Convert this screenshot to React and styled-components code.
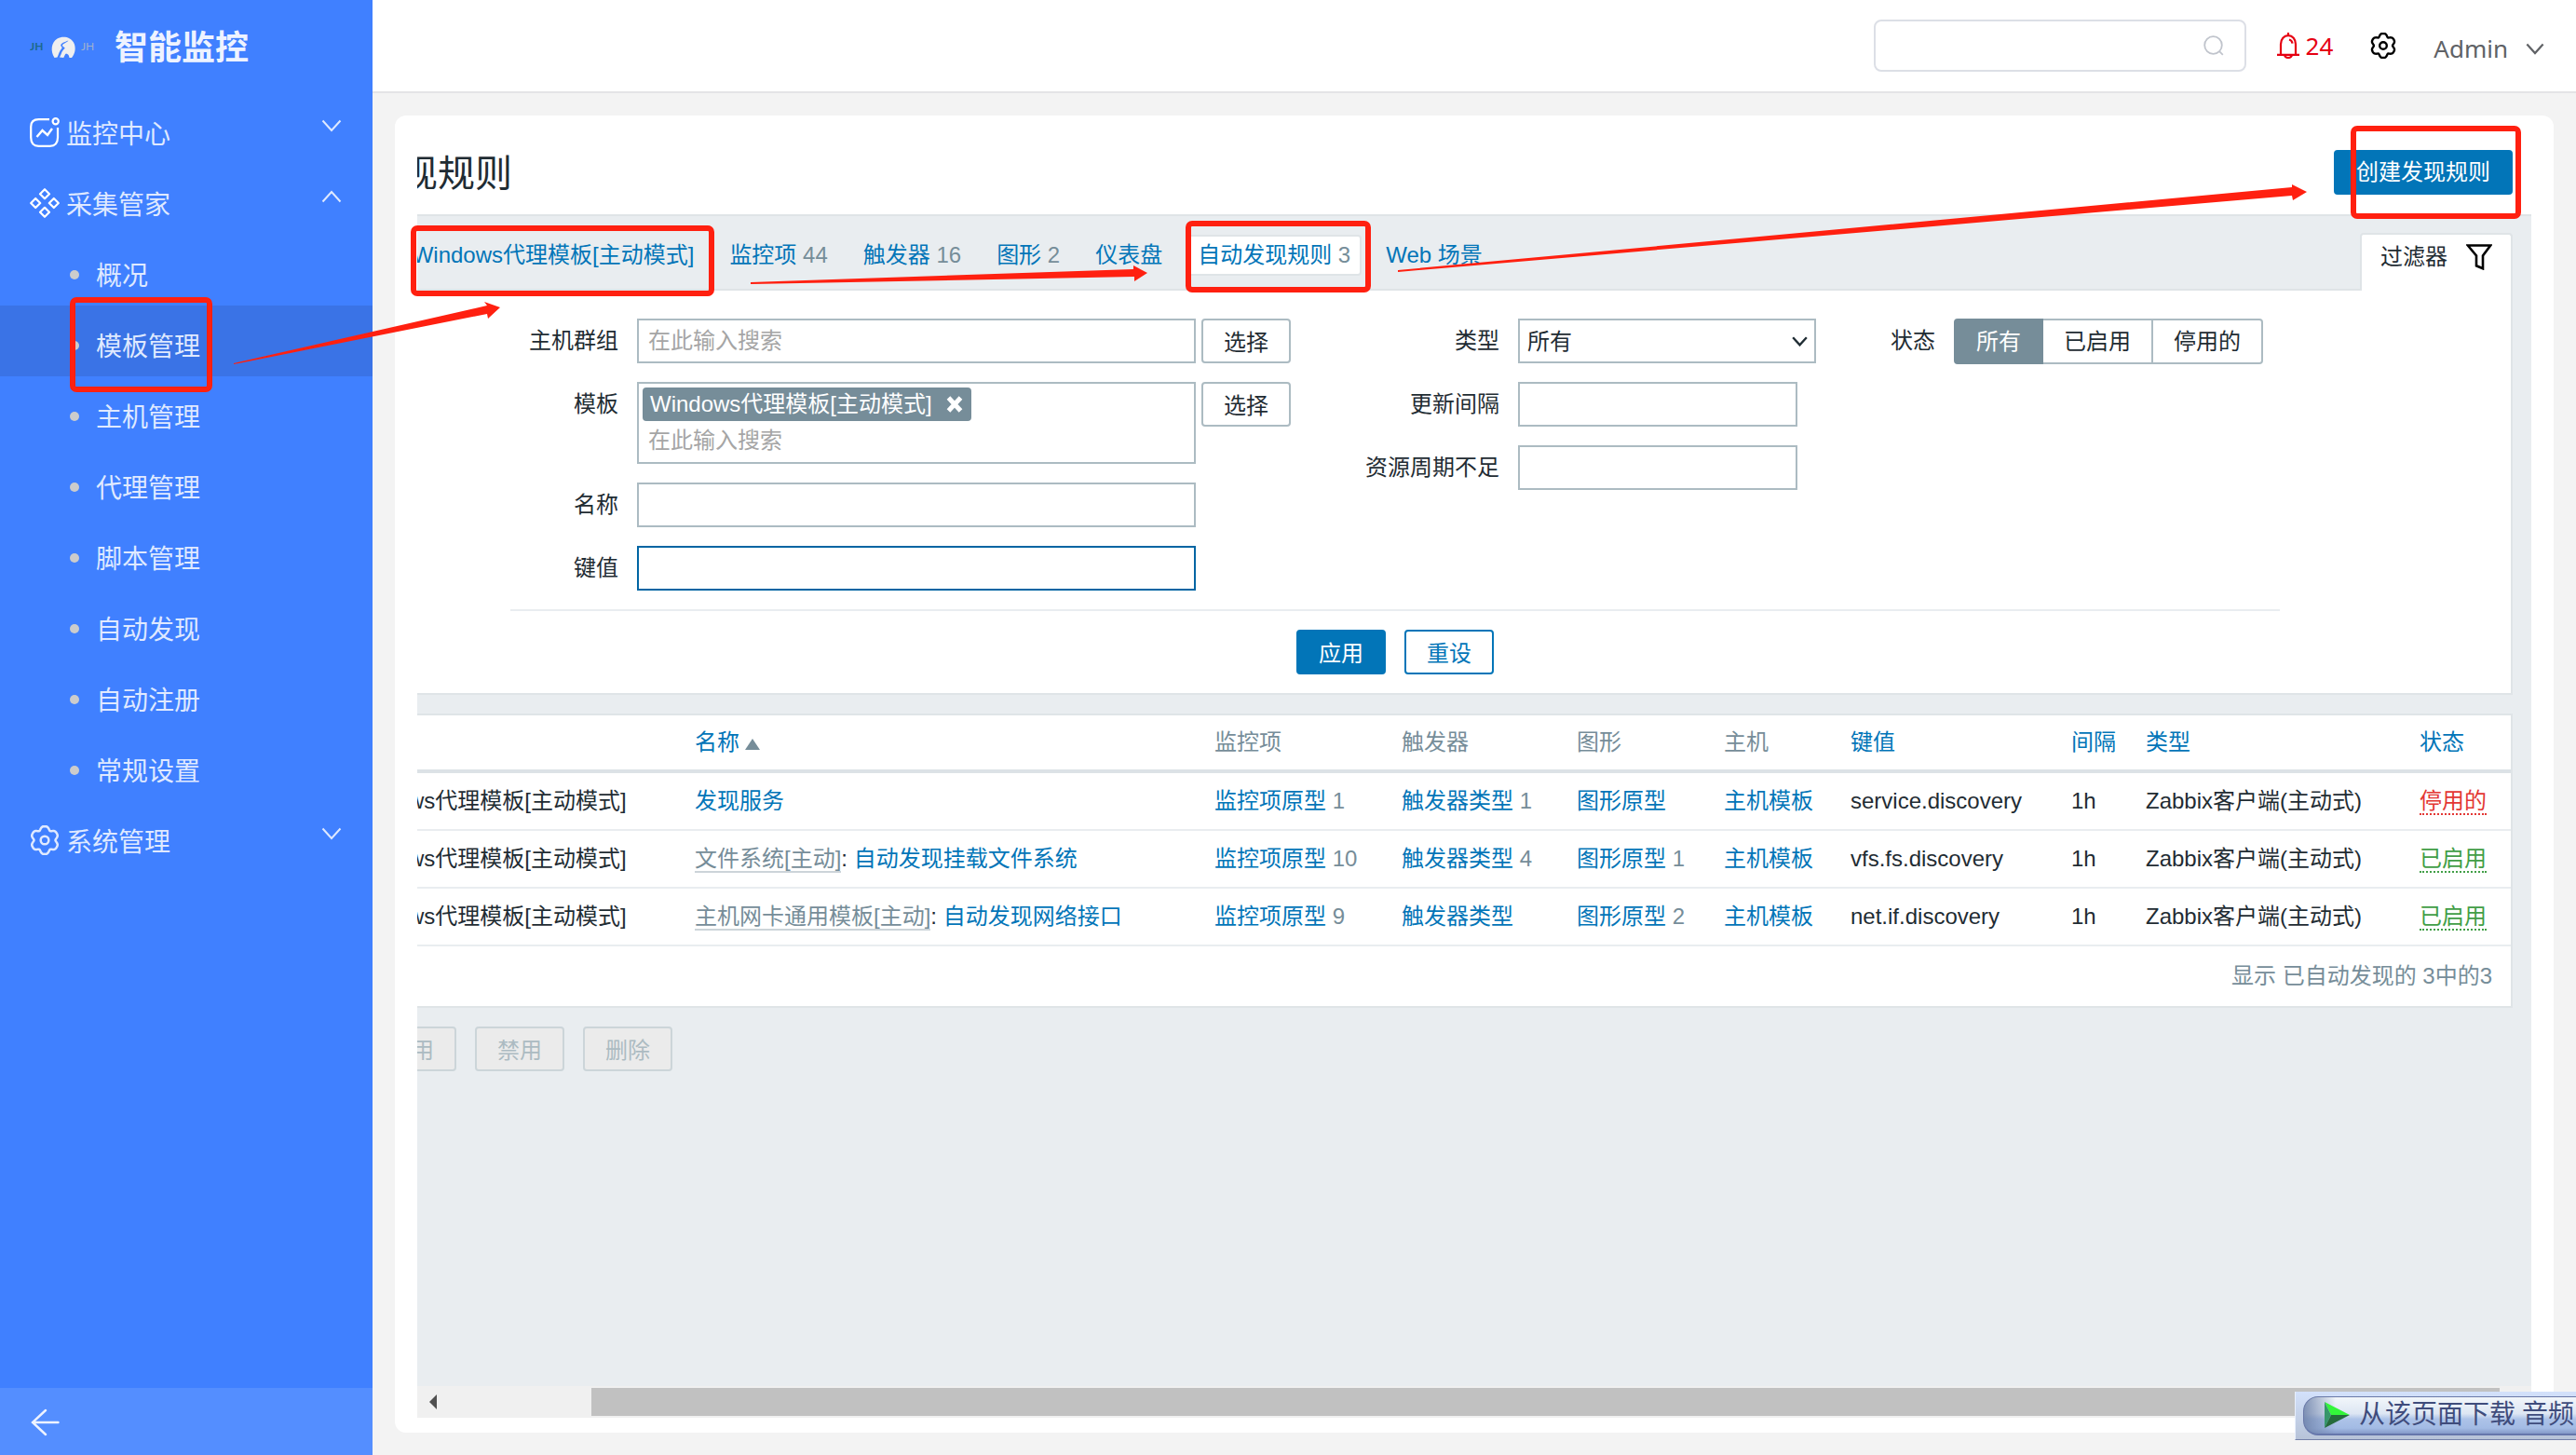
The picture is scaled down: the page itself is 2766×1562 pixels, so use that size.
import React from "react";
import styled, { createGlobalStyle } from "styled-components";

const GlobalStyle = createGlobalStyle`
  * {
    box-sizing: border-box;
  }

  body {
    margin: 0;
    background: #f3f3f3;
    color: #1f2c33;
    font-family: "Liberation Sans", "Noto Sans CJK SC", sans-serif;
    font-size: 24px;
    line-height: 28px;
  }

  a {
    color: #0275b8;
    text-decoration: none;
  }

  button,
  input,
  select {
    font: inherit;
    color: inherit;
  }
`;

const Layout = styled.div`
  display: flex;
  min-height: 100vh;
`;

/* ---------- sidebar ---------- */

const Sidebar = styled.aside`
  display: flex;
  flex-direction: column;
  flex: 0 0 400px;
  background: #4080ff;
  color: #dfe9ff;
  font-family: "Noto Sans", "Noto Sans CJK SC", sans-serif;
`;

const Brand = styled.div`
  display: flex;
  align-items: center;
  height: 100px;
  padding-left: 32px;
`;

const BrandName = styled.h1`
  margin: 2px 0 0 22px;
  color: #eef3ff;
  font-size: 36px;
  line-height: 44px;
  font-weight: 700;
`;

const Nav = styled.nav`
  flex: 1;
`;

const NavGroup = styled.button`
  display: flex;
  align-items: center;
  width: 100%;
  height: 76px;
  padding: 8px 33px 0 32px;
  border: 0;
  background: transparent;
  color: #dfe9ff;
  font-size: 28px;
  line-height: 40px;
  text-align: left;
  cursor: pointer;

  span {
    flex: 1;
    margin: 2px 0 0 7px;
  }

  > svg:last-child {
    margin-bottom: 14px;
  }
`;

const NavLink = styled.a`
  display: flex;
  align-items: center;
  gap: 18px;
  height: 76px;
  padding: 10px 0 0 75px;
  background: ${(props) => (props.$active ? "#3a73e6" : "transparent")};
  color: #dfe9ff;
  font-size: 28px;
  line-height: 40px;

  &::before {
    content: "";
    width: 10px;
    height: 10px;
    border-radius: 50%;
    background: #cccccc;
  }
`;

const Collapse = styled.button`
  display: flex;
  align-items: center;
  height: 72px;
  padding: 2px 0 0 32px;
  border: 0;
  background: #548eff;
  color: #eef3ff;
  cursor: pointer;
`;

/* ---------- top bar ---------- */

const Main = styled.main`
  display: flex;
  flex: 1;
  flex-direction: column;
  min-width: 0;
`;

const TopBar = styled.header`
  display: flex;
  align-items: center;
  justify-content: flex-end;
  height: 100px;
  padding: 0 34px;
  border-bottom: 2px solid #e4e4e6;
  background: #ffffff;
  font-family: "Noto Sans", "Noto Sans CJK SC", sans-serif;
  font-size: 26px;
  line-height: 36px;
`;

const SearchBox = styled.label`
  display: flex;
  align-items: center;
  width: 400px;
  height: 56px;
  padding: 0 22px 0 16px;
  border: 2px solid #dcdfe6;
  border-radius: 8px;

  input {
    flex: 1;
    min-width: 0;
    border: 0;
    outline: none;
    background: transparent;
  }
`;

const Alerts = styled.a`
  display: flex;
  align-items: center;
  gap: 7px;
  margin-left: 33px;
  color: #e60012;
`;

const IconButton = styled.button`
  display: flex;
  margin: 0 40px;
  padding: 0;
  border: 0;
  background: transparent;
  color: #000000;
  cursor: pointer;
`;

const UserMenu = styled.button`
  display: flex;
  align-items: center;
  gap: 19px;
  padding: 6px 0 0;
  border: 0;
  background: transparent;
  color: #606266;
  cursor: pointer;
`;

/* ---------- page card ---------- */

const Card = styled.section`
  display: flex;
  flex: 1;
  flex-direction: column;
  margin: 24px;
  padding: 0 24px 16px;
  border-radius: 12px;
  background: #ffffff;
`;

const Viewport = styled.div`
  display: flex;
  flex: 1;
  flex-direction: column;
  overflow: hidden;
`;

const Scrolled = styled.div`
  display: flex;
  flex: 1;
  flex-direction: column;
  margin-left: -170px;
`;

const Button = styled.button`
  height: 48px;
  min-width: 96px;
  padding: 3px 22px 0;
  border: 2px solid ${(props) => (props.$plain ? "#acbbc2" : "#0275b8")};
  border-radius: 4px;
  background: ${(props) => (props.$primary ? "#0275b8" : "#ffffff")};
  color: ${(props) => (props.$primary ? "#ffffff" : props.$plain ? "#1f2c33" : "#0275b8")};
  line-height: 28px;
  white-space: nowrap;
  cursor: pointer;

  &:disabled {
    border-color: #ccd5d9;
    background: #ebebeb;
    color: #acbbc2;
    cursor: default;
  }
`;

const PageHead = styled.div`
  display: flex;
  align-items: flex-start;
  justify-content: space-between;
  height: 106px;
  padding: 37px 20px 0 32px;

  ${Button} {
    padding-top: 0;
  }
`;

const PageTitle = styled.h2`
  margin: 0;
  font-size: 40px;
  line-height: 50px;
  font-weight: 400;
`;

const PageBody = styled.div`
  flex: 1;
  border-top: 2px solid #dfe4e7;
  background: #e9edf0;
`;

const TabBar = styled.div`
  display: flex;
  align-items: flex-start;
  justify-content: space-between;
  height: 78px;
  padding: 0 20px 0 12px;
`;

const Tabs = styled.nav`
  display: flex;
  align-items: center;
  gap: 14px;
  padding-top: 20px;
  white-space: nowrap;
`;

const Crumb = styled.span`
  display: flex;
  align-items: center;
  color: #768d99;
`;

const Tab = styled.a`
  height: 44px;
  padding: 6px 10px;
  border: 2px solid transparent;
  border-radius: 4px;
  ${(props) => props.$active && `
    border-color: #dfe4e7;
    background: #ffffff;
  `}
`;

const Count = styled.span`
  color: #768d99;
`;

const FilterToggle = styled.button`
  display: flex;
  align-items: center;
  align-self: flex-end;
  gap: 20px;
  height: 62px;
  margin-bottom: -2px;
  padding: 0 20px 12px 20px;
  border: 2px solid #dfe4e7;
  border-bottom: 0;
  border-radius: 4px 4px 0 0;
  background: #ffffff;
  z-index: 1;
  cursor: pointer;
`;

/* ---------- filter ---------- */

const FilterPanel = styled.form`
  margin: 0 20px;
  padding: 30px 20px 20px;
  border: 2px solid #dfe4e7;
  background: #ffffff;
`;

const FilterFields = styled.div`
  display: flex;
  align-items: flex-start;
  gap: 80px;
  max-width: 1900px;
  margin: 0 auto;
  padding-bottom: 20px;
  border-bottom: 2px solid #e9edf0;
`;

const FilterColumn = styled.div`
  display: grid;
  grid-template-columns: ${(props) => props.$labelWidth}px auto;
  gap: 20px;
`;

const FieldLabel = styled.label`
  height: 48px;
  line-height: 48px;
  text-align: right;
  white-space: nowrap;
`;

const FieldRow = styled.div`
  display: flex;
  align-items: flex-start;
  gap: 6px;
`;

const TextInput = styled.input`
  width: ${(props) => props.$width}px;
  height: 48px;
  padding: 0 10px;
  border: 2px solid ${(props) => (props.$focused ? "#0065a3" : "#acbbc2")};
  border-radius: 0;
  outline: none;
  background: #ffffff;

  &::placeholder {
    color: #a5a5a5;
    opacity: 1;
  }
`;

const MultiSelect = styled.div`
  width: 600px;
  height: 88px;
  padding: 4px;
  border: 2px solid #acbbc2;

  input {
    display: block;
    width: 100%;
    height: 42px;
    padding: 0 6px;
    border: 0;
    outline: none;
  }

  input::placeholder {
    color: #a5a5a5;
    opacity: 1;
  }
`;

const Tag = styled.span`
  display: inline-flex;
  align-items: center;
  gap: 15px;
  height: 36px;
  padding: 0 9px 0 8px;
  border-radius: 4px;
  background: #768d99;
  color: #ffffff;
  vertical-align: top;

  button {
    display: flex;
    padding: 0;
    border: 0;
    background: transparent;
    cursor: pointer;
  }
`;

const SelectWrap = styled.div`
  position: relative;
  width: 320px;
  height: 48px;

  select {
    width: 100%;
    height: 48px;
    padding: 2px 8px 0;
    border: 2px solid #acbbc2;
    border-radius: 0;
    background: #ffffff;
    appearance: none;
  }

  svg {
    position: absolute;
    top: 19px;
    right: 9px;
    pointer-events: none;
  }
`;

const Segments = styled.div`
  display: flex;
  height: 49px;
`;

const Segment = styled.label`
  position: relative;
  display: flex;
  align-items: center;
  padding: 0 22px;
  border: 2px solid #acbbc2;
  border-left-width: 0;
  white-space: nowrap;
  cursor: pointer;

  &:first-child {
    border-left-width: 2px;
    border-radius: 4px 0 0 4px;
  }

  &:last-child {
    border-radius: 0 4px 4px 0;
  }

  &:has(input:checked) {
    border-color: #768d99;
    background: #768d99;
    color: #ffffff;
  }

  input {
    position: absolute;
    inset: 0;
    margin: 0;
    opacity: 0;
  }
`;

const FilterActions = styled.div`
  display: flex;
  justify-content: center;
  gap: 20px;
  padding-top: 20px;
`;

/* ---------- table ---------- */

const RuleTable = styled.table`
  width: calc(100% - 40px);
  margin: 20px 20px 0;
  border: 2px solid #dfe4e7;
  border-spacing: 0;
  border-collapse: separate;
  background: #ffffff;
  table-layout: fixed;
  white-space: nowrap;

  th,
  td {
    height: 62px;
    padding: 0 10px 1px;
    border-bottom: 2px solid #e9edf0;
    text-align: left;
    font-weight: 400;
  }

  th {
    border-bottom: 4px solid #dce2e6;
    color: #768d99;
  }

  tfoot td {
    height: 64px;
    padding-right: 20px;
    border-bottom: 0;
    color: #768d99;
    text-align: right;
  }

  input {
    display: block;
    width: 24px;
    height: 24px;
    margin: 0 auto;
  }
`;

const Col = styled.col`
  width: ${(props) => (props.$width ? `${props.$width}px` : "auto")};
`;

const SortArrow = styled.span`
  display: inline-block;
  margin-left: 6px;
  border: 8px solid transparent;
  border-top: 0;
  border-bottom: 12px solid #768d99;
`;

const ParentLink = styled.a`
  border-bottom: 2px solid #ccd4d9;
  color: #768d99;
`;

const StatusLink = styled.a`
  border-bottom: 2px dotted;
  color: ${(props) => (props.$enabled ? "#429e47" : "#e33734")};
`;

const ActionBar = styled.div`
  display: flex;
  align-items: center;
  gap: 20px;
  padding: 20px;
`;

const Selected = styled.span`
  width: 76px;
  color: #768d99;
`;

const ScrollTrack = styled.div`
  display: flex;
  align-items: center;
  height: 34px;
  background: #f0f0f0;
`;

const ScrollArrow = styled.button`
  display: flex;
  align-items: center;
  justify-content: center;
  width: 34px;
  height: 34px;
  padding: 0;
  border: 0;
  background: transparent;
`;

const ScrollThumb = styled.div`
  flex: 1;
  height: 30px;
  margin-left: 153px;
  background: #c1c1c1;
`;

/* ---------- things floating above the page ---------- */

const DownloadBar = styled.div`
  position: fixed;
  right: 0;
  bottom: 16px;
  width: 302px;
  height: 52px;
  padding: 5px 0 5px 8px;
  border: solid #7380a8;
  border-width: 0 0 1px 0;
  border-left: 1px solid #e8effc;
  overflow: hidden;
  background: linear-gradient(#d3e1fb, #b7c3d8);
`;

const DownloadButton = styled.button`
  display: flex;
  align-items: center;
  gap: 10px;
  width: 320px;
  height: 42px;
  padding: 0 0 2px 22px;
  border: 1px solid #6a79a8;
  border-bottom: 2px solid #6677ab;
  border-radius: 16px 0 0 16px;
  background: linear-gradient(90deg, rgba(110, 130, 170, 0.85), rgba(150, 165, 200, 0) 34px),
    linear-gradient(#f2f6fa 0%, #dde6f3 45%, #adc3e8 60%, #a3bbe4 85%, #8499c8 100%);
  color: #3f4c7c;
  font-family: "Liberation Serif", "Noto Sans CJK SC", serif;
  font-size: 28px;
  line-height: 36px;
  white-space: nowrap;
`;

const Annotations = styled.svg`
  position: absolute;
  top: 0;
  left: 0;
  pointer-events: none;
  z-index: 5;
`;

/* ---------- icons ---------- */

const gearPath = (() => {
  const points = [];
  for (let i = 0; i < 96; i++) {
    const a = (i / 96) * Math.PI * 2;
    const r = 11.9 + 1.5 * Math.cos(6 * a) - 0.35 * Math.cos(12 * a);
    points.push(`${(16 + r * Math.sin(a)).toFixed(2)} ${(16 - r * Math.cos(a)).toFixed(2)}`);
  }
  return `M${points.join("L")}Z`;
})();

const GearIcon = ({ size, stroke = 2.2 }) => (
  <svg width={size} height={size} viewBox="2 2 28 28" fill="none" stroke="currentColor" strokeWidth={stroke}>
    <path d={gearPath} />
    <circle cx="16" cy="16" r="3.8" />
  </svg>
);

const ChevronIcon = ({ up, width = 22, height = 14, stroke = 2 }) => (
  <svg width={width} height={height} viewBox="0 0 22 14" fill="none" stroke="currentColor" strokeWidth={stroke}>
    <path d={up ? "M1.5 12.5 11 2l9.5 10.5" : "M1.5 1.5 11 12l9.5-10.5"} />
  </svg>
);

const MonitorIcon = () => (
  <svg width="32" height="32" viewBox="0 0 32 32" fill="none" stroke="#fff" strokeWidth="2.2">
    <path d="M21 2.2H9.5C4 2.2 1.2 5 1.2 10v11.500c0 6 2.800 9.300 8.300 9.300h12c5.500 0 8.500-3.300 8.500-9.300V11" />
    <circle cx="27.700" cy="4.200" r="3.100" />
    <path d="M7.500 21l6-7 5.500 5 5-7" strokeWidth="2.400" />
  </svg>
);

const DiamondsIcon = () => (
  <svg width="32" height="32" viewBox="0 0 32 32" fill="none" stroke="#fff" strokeWidth="2.2" strokeLinejoin="round">
    <path d="M16 1.200l5 5-5 5-5-5zM16 20.800l5 5-5 5-5-5zM6.200 11l5 5-5 5-5-5zM25.800 11l5 5-5 5-5-5z" />
  </svg>
);

const LogoMark = () => (
  <svg width="69" height="32" viewBox="0 0 69 32">
    <text x="0" y="20" fill="#1c6a8c" fontSize="12" fontWeight="700" fontFamily="Lato, sans-serif">JH</text>
    <path
      fill="#efefef"
      d="M26.500 28C22 21 22.800 11.500 29.500 7.500c6-3.500 14-2 17.500 4 3 5.500 1.800 12-2 16.500h-2.500c-.5-3-1.500-4-3.500-4.500-1.500 1-1.700 2.500-2.700 4.500l-4.300-.5c2.500-4 1.500-6 5.500-9.500 1-1-3-2-2.500-3.500.5-1.500 5-3 6.500-5-4 1.500-8.500 3-8.200 5.200.2 1.300 1.700 2 1.200 3-3 3-3.500 7-5 9.800z"
    />
    <text x="55" y="20" fill="#9fb0cf" fontSize="12" fontWeight="400" fontFamily="Lato, sans-serif">JH</text>
  </svg>
);

const SearchIcon = () => (
  <svg width="22" height="22" viewBox="0 0 22 22" fill="none" stroke="#c0c4cc" strokeWidth="1.800">
    <circle cx="10.500" cy="10.500" r="9.300" />
    <path d="M16.800 16.800l4 4" />
  </svg>
);

const BellIcon = () => (
  <svg width="24" height="28" viewBox="0 0 24 28" fill="none" stroke="currentColor" strokeWidth="2.2">
    <path d="M12 0v3M4 23.500V12.500c0-5.500 3.500-9.300 8-9.300s8 3.800 8 9.300v11M0 23.800h24" />
    <path d="M13 7.500c2 .5 3.200 2 3.500 4.200M8 24c.5 2 2 3 4 3s3.500-1 4-3" />
  </svg>
);

const FilterIcon = () => (
  <svg width="28" height="28" viewBox="0 0 28 28" fill="none" stroke="#000" strokeWidth="2.600">
    <path d="M1.800 1.500h24.400l-8.200 11v13.800l-7-3V12.500z" />
  </svg>
);

const BackIcon = () => (
  <svg width="32" height="30" viewBox="0 0 32 30" fill="none" stroke="currentColor" strokeWidth="2.400" strokeLinecap="round">
    <path d="M30.500 15H3M17 2L3 15l14 13" />
  </svg>
);

const CloseIcon = () => (
  <svg width="18" height="18" viewBox="0 0 18 18" stroke="#fff" strokeWidth="5">
    <path d="M2.500 2l13 14M15.500 2l-13 14" />
  </svg>
);

const PlayIcon = () => (
  <svg width="27" height="28" viewBox="0 0 27 28">
    <path d="M0 0l27 14H7z" fill="#33f53a" />
    <path d="M0 0l7 14-7 14z" fill="#37966b" />
    <path d="M7 14h20L0 28z" fill="#256b3c" />
  </svg>
);

const templateName = "Windows代理模板[主动模式]";

const subItems = ["概况", "模板管理", "主机管理", "代理管理", "脚本管理", "自动发现", "自动注册", "常规设置"];

const tabs = [
  { label: templateName },
  { label: "监控项", count: 44 },
  { label: "触发器", count: 16 },
  { label: "图形", count: 2 },
  { label: "仪表盘" },
  { label: "自动发现规则", count: 3, active: true },
  { label: "Web 场景" },
];

const colWidths = [60, 376, null, 201, 188, 158, 136, 237, 80, 294, 108];

const rules = [
  { name: "发现服务", items: 1, triggers: 1, key: "service.discovery", enabled: false },
  { parent: "文件系统[主动]", name: "自动发现挂载文件系统", items: 10, triggers: 4, graphs: 1, key: "vfs.fs.discovery", enabled: true },
  { parent: "主机网卡通用模板[主动]", name: "自动发现网络接口", items: 9, graphs: 2, key: "net.if.discovery", enabled: true },
];

const Counted = ({ label, count }) => (
  <>
    <a href="#">{label}</a>
    {count && <Count> {count}</Count>}
  </>
);

const App = () => {
  return (
    <>
      <GlobalStyle />
      <Layout>
        <Sidebar>
          <Brand>
            <LogoMark />
            <BrandName>智能监控</BrandName>
          </Brand>
          <Nav>
            <NavGroup type="button">
              <MonitorIcon />
              <span>监控中心</span>
              <ChevronIcon />
            </NavGroup>
            <NavGroup type="button">
              <DiamondsIcon />
              <span>采集管家</span>
              <ChevronIcon up />
            </NavGroup>
            {subItems.map((item) => (
              <NavLink key={item} href="#" $active={item === "模板管理"}>
                {item}
              </NavLink>
            ))}
            <NavGroup type="button">
              <GearIcon size={32} stroke={2.2} />
              <span>系统管理</span>
              <ChevronIcon />
            </NavGroup>
          </Nav>
          <Collapse type="button" aria-label="收起菜单">
            <BackIcon />
          </Collapse>
        </Sidebar>

        <Main>
          <TopBar>
            <SearchBox>
              <input type="text" aria-label="搜索" />
              <SearchIcon />
            </SearchBox>
            <Alerts href="#">
              <BellIcon />
              24
            </Alerts>
            <IconButton type="button" aria-label="设置">
              <GearIcon size={28} stroke={2.4} />
            </IconButton>
            <UserMenu type="button">
              Admin
              <ChevronIcon width={20} height={13} stroke={2.4} />
            </UserMenu>
          </TopBar>

          <Card>
            <Viewport>
              <Scrolled>
                <PageHead>
                  <PageTitle>自动发现规则</PageTitle>
                  <Button type="button" $primary>创建发现规则</Button>
                </PageHead>
                <PageBody>
                  <TabBar>
                    <Tabs>
                      <Crumb>
                        <Tab href="#">所有模板</Tab>/
                      </Crumb>
                      {tabs.map((tab) => (
                        <Tab key={tab.label} href="#" $active={tab.active}>
                          {tab.label}
                          {tab.count && <Count> {tab.count}</Count>}
                        </Tab>
                      ))}
                    </Tabs>
                    <FilterToggle type="button">
                      过滤器
                      <FilterIcon />
                    </FilterToggle>
                  </TabBar>

                  <FilterPanel onSubmit={(e) => e.preventDefault()}>
                    <FilterFields>
                      <FilterColumn $labelWidth={116}>
                        <FieldLabel htmlFor="groups">主机群组</FieldLabel>
                        <FieldRow>
                          <TextInput id="groups" $width={600} placeholder="在此输入搜索" />
                          <Button type="button" $plain>选择</Button>
                        </FieldRow>
                        <FieldLabel htmlFor="templates">模板</FieldLabel>
                        <FieldRow>
                          <MultiSelect>
                            <Tag>
                              {templateName}
                              <button type="button" aria-label="移除">
                                <CloseIcon />
                              </button>
                            </Tag>
                            <input id="templates" placeholder="在此输入搜索" />
                          </MultiSelect>
                          <Button type="button" $plain>选择</Button>
                        </FieldRow>
                        <FieldLabel htmlFor="name">名称</FieldLabel>
                        <TextInput id="name" $width={600} />
                        <FieldLabel htmlFor="key">键值</FieldLabel>
                        <TextInput id="key" $width={600} $focused />
                      </FilterColumn>

                      <FilterColumn $labelWidth={144}>
                        <FieldLabel htmlFor="type">类型</FieldLabel>
                        <SelectWrap>
                          <select id="type">
                            <option>所有</option>
                          </select>
                          <ChevronIcon width={17} height={11} stroke={3} />
                        </SelectWrap>
                        <FieldLabel htmlFor="delay">更新间隔</FieldLabel>
                        <TextInput id="delay" $width={300} />
                        <FieldLabel htmlFor="lifetime">资源周期不足</FieldLabel>
                        <TextInput id="lifetime" $width={300} />
                      </FilterColumn>

                      <FilterColumn $labelWidth={48}>
                        <FieldLabel as="span" id="status-label">状态</FieldLabel>
                        <Segments role="radiogroup" aria-labelledby="status-label">
                          {["所有", "已启用", "停用的"].map((option, i) => (
                            <Segment key={option}>
                              <input type="radio" name="status" defaultChecked={i === 0} />
                              {option}
                            </Segment>
                          ))}
                        </Segments>
                      </FilterColumn>
                    </FilterFields>
                    <FilterActions>
                      <Button type="submit" $primary>应用</Button>
                      <Button type="reset">重设</Button>
                    </FilterActions>
                  </FilterPanel>

                  <RuleTable>
                    <colgroup>
                      {colWidths.map((width, i) => (
                        <Col key={i} $width={width} />
                      ))}
                    </colgroup>
                    <thead>
                      <tr>
                        <th><input type="checkbox" aria-label="全选" /></th>
                        <th>模板</th>
                        <th><a href="#">名称<SortArrow /></a></th>
                        <th>监控项</th>
                        <th>触发器</th>
                        <th>图形</th>
                        <th>主机</th>
                        <th><a href="#">键值</a></th>
                        <th><a href="#">间隔</a></th>
                        <th><a href="#">类型</a></th>
                        <th><a href="#">状态</a></th>
                      </tr>
                    </thead>
                    <tbody>
                      {rules.map((rule) => (
                        <tr key={rule.key}>
                          <td><input type="checkbox" aria-label={rule.name} /></td>
                          <td>{templateName}</td>
                          <td>
                            {rule.parent && (
                              <>
                                <ParentLink href="#">{rule.parent}</ParentLink>
                                {": "}
                              </>
                            )}
                            <a href="#">{rule.name}</a>
                          </td>
                          <td><Counted label="监控项原型" count={rule.items} /></td>
                          <td><Counted label="触发器类型" count={rule.triggers} /></td>
                          <td><Counted label="图形原型" count={rule.graphs} /></td>
                          <td><a href="#">主机模板</a></td>
                          <td>{rule.key}</td>
                          <td>1h</td>
                          <td>Zabbix客户端(主动式)</td>
                          <td>
                            <StatusLink href="#" $enabled={rule.enabled}>
                              {rule.enabled ? "已启用" : "停用的"}
                            </StatusLink>
                          </td>
                        </tr>
                      ))}
                    </tbody>
                    <tfoot>
                      <tr>
                        <td colSpan={11}>显示 已自动发现的 3中的3</td>
                      </tr>
                    </tfoot>
                  </RuleTable>

                  <ActionBar>
                    <Selected>0 选择</Selected>
                    <Button type="button" disabled>启用</Button>
                    <Button type="button" disabled>禁用</Button>
                    <Button type="button" disabled>删除</Button>
                  </ActionBar>
                </PageBody>
              </Scrolled>
              <ScrollTrack>
                <ScrollArrow type="button" aria-label="向左滚动">
                  <svg width="8" height="16" viewBox="0 0 8 16">
                    <path d="M8 0v16L0 8z" fill="#505050" />
                  </svg>
                </ScrollArrow>
                <ScrollThumb />
                <ScrollArrow type="button" aria-label="向右滚动">
                  <svg width="8" height="16" viewBox="0 0 8 16">
                    <path d="M0 0v16l8-8z" fill="#505050" />
                  </svg>
                </ScrollArrow>
              </ScrollTrack>
            </Viewport>
          </Card>
        </Main>
      </Layout>

      <DownloadBar>
        <DownloadButton type="button">
          <PlayIcon />
          从该页面下载 音频
        </DownloadButton>
      </DownloadBar>

      <Annotations width="2766" height="1562" viewBox="0 0 2766 1562">
        <g fill="none" stroke="#ff2010" strokeWidth="6">
          <rect x="78" y="322" width="147" height="96" rx="4" />
          <rect x="444" y="245" width="320" height="70" rx="4" />
          <rect x="1276" y="240" width="193" height="71" rx="4" />
          <rect x="2527" y="138" width="177" height="94" rx="4" />
        </g>
        <g fill="#ff2010">
          <path d="M251 390l272-62-3-4 17 6-13 12-1-5-272 54z" />
          <path d="M806 303l411-14v-4l15 8-14 9v-5l-412 8z" />
          <path d="M1501 290l960-89v-3l16 8-15 9-1-5-960 82z" />
        </g>
      </Annotations>
    </>
  );
};

export default App;
